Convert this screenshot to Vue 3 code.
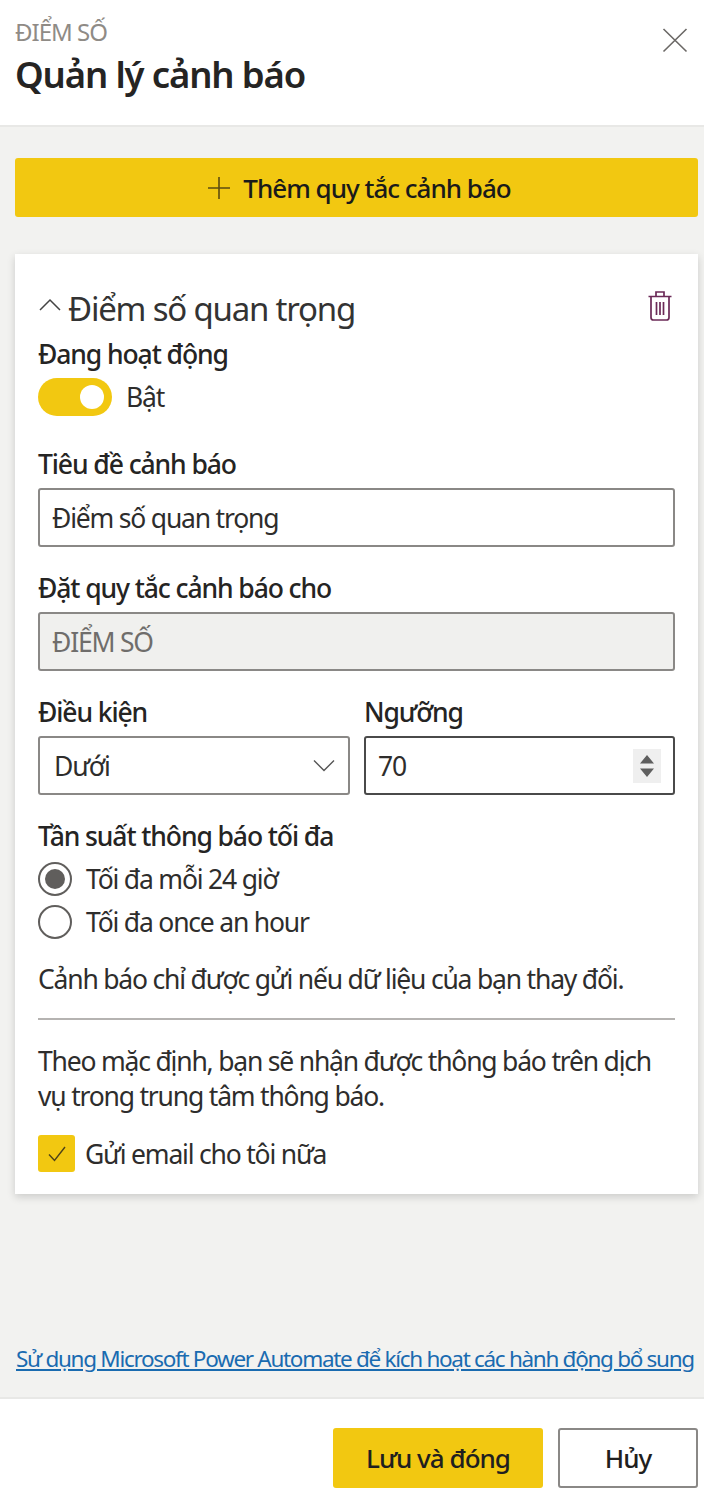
<script setup>
import { ref } from 'vue'

const isOn = ref(true)
const title = ref('Điểm số quan trọng')
const frequency = ref('day')
const sendEmail = ref(true)
</script>

<template>
  <div class="pane">
    <header class="head">
      <div class="head-text">
        <div class="kicker">ĐIỂM SỐ</div>
        <h1 class="pane-title">Quản lý cảnh báo</h1>
      </div>
      <svg class="close" width="26" height="26" viewBox="0 0 26 26">
        <path d="M1.5 2 L24.5 24.5 M24.5 2 L1.5 24.5" fill="none" stroke="#6b6866" stroke-width="1.6" />
      </svg>
    </header>

    <main class="body">
      <button class="add-btn">
        <svg width="24" height="24" viewBox="0 0 24 24">
          <path d="M12 1 V23 M1 12 H23" fill="none" stroke="#5c4c10" stroke-width="1.6" />
        </svg>
        <span>Thêm quy tắc cảnh báo</span>
      </button>

      <section class="card">
        <div class="card-head">
          <svg class="chevron" width="24" height="14" viewBox="0 0 24 14">
            <path d="M2 12 L12 2 L22 12" fill="none" stroke="#444" stroke-width="1.5" />
          </svg>
          <h2 class="card-title">Điểm số quan trọng</h2>
          <svg class="trash" width="26" height="32" viewBox="0 0 26 32">
            <path d="M1.5 6.5 H24.5 M9 6 V2 H17 V6 M4 7 V27.5 Q4 30 6.500 30 H19.500 Q22 30 22 27.500 V7 M9.500 12 V25 M13 12 V25 M16.500 12 V25"
              fill="none" stroke="#6b2a57" stroke-width="1.7" />
          </svg>
        </div>

        <div class="label">Đang hoạt động</div>
        <div class="toggle-row" @click="isOn = !isOn">
          <span class="toggle"><span class="knob"></span></span>
          <span class="text">{{ isOn ? 'Bật' : 'Tắt' }}</span>
        </div>

        <label class="label title-label">Tiêu đề cảnh báo</label>
        <input v-model="title" class="field" type="text">

        <div class="label rule-label">Đặt quy tắc cảnh báo cho</div>
        <div class="field disabled">ĐIỂM SỐ</div>

        <div class="cols">
          <div class="col-cond">
            <div class="label">Điều kiện</div>
            <div class="field select">
              <span>Dưới</span>
              <svg width="22" height="13" viewBox="0 0 22 13">
                <path d="M1 1.500 L11 11.500 L21 1.500" fill="none" stroke="#555" stroke-width="1.4" />
              </svg>
            </div>
          </div>
          <div class="col-limit">
            <div class="label">Ngưỡng</div>
            <div class="field number">
              <span>70</span>
              <span class="spin">
                <svg width="16" height="26" viewBox="0 0 16 26">
                  <path d="M8 2 L15 10.500 H1 Z M1 15.500 H15 L8 24 Z" fill="#5f5f5f" />
                </svg>
              </span>
            </div>
          </div>
        </div>

        <div class="label freq-label">Tần suất thông báo tối đa</div>
        <div class="radio-row" @click="frequency = 'day'">
          <span class="radio" :class="{ checked: frequency === 'day' }"></span>
          <span class="text">Tối đa mỗi 24 giờ</span>
        </div>
        <div class="radio-row second" @click="frequency = 'hour'">
          <span class="radio" :class="{ checked: frequency === 'hour' }"></span>
          <span class="text">Tối đa once an hour</span>
        </div>

        <p class="note">Cảnh báo chỉ được gửi nếu dữ liệu của bạn thay đổi.</p>
        <hr class="rule">
        <p class="note default-note">Theo mặc định, bạn sẽ nhận được thông báo trên dịch vụ trong trung tâm thông báo.</p>

        <div class="check-row" @click="sendEmail = !sendEmail">
          <span class="check">
            <svg v-if="sendEmail" width="20" height="18" viewBox="0 0 20 18">
              <path d="M2 9.500 L7.500 15.500 L18 2" fill="none" stroke="#4d4318" stroke-width="1.4" />
            </svg>
          </span>
          <span class="text">Gửi email cho tôi nữa</span>
        </div>
      </section>

      <a class="flow-link" href="#">Sử dụng Microsoft Power Automate để kích hoạt các hành động bổ sung</a>
    </main>

    <footer class="foot">
      <button class="save">Lưu và đóng</button>
      <button class="cancel">Hủy</button>
    </footer>
  </div>
</template>

<style scoped>
.pane {
  height: 1504px;
  display: flex;
  flex-direction: column;
  font-family: "Noto Sans", "Open Sans", sans-serif;
  color: #252423;
  background: #f2f2f0;
  overflow: hidden;
}

.head {
  height: 127px;
  box-sizing: border-box;
  padding: 17px 15px 0 15px;
  background: #fff;
  border-bottom: 2px solid #e8e8e6;
  display: flex;
  justify-content: space-between;
  align-items: flex-start;
}

.kicker {
  font-size: 24px;
  line-height: 30px;
  color: #8f8b86;
  letter-spacing: -1px;
}

.pane-title {
  margin: 5px 0 0;
  font-size: 36.500px;
  line-height: 44px;
  font-weight: 600;
  letter-spacing: -1.15px;
  color: #252423;
}

.close {
  margin-top: 10px;
  margin-right: 1px;
}

.body {
  flex: 1;
  padding: 31px 6px 0 15px;
  display: flex;
  flex-direction: column;
}

.add-btn {
  height: 59px;
  flex: none;
  border: 0;
  border-radius: 3px;
  background: #f2c811;
  color: #1a1a1a;
  font: 500 26px "Noto Sans", sans-serif;
  letter-spacing: -1px;
  display: flex;
  align-items: center;
  justify-content: center;
  gap: 12px;
  padding: 0 0 0 5px;
}

.card {
  margin-top: 37px;
  height: 940px;
  box-sizing: border-box;
  padding: 29px 23px 0;
  background: #fff;
  box-shadow: 0 3px 8px rgba(0, 0, 0, 0.16);
}

.card-head {
  height: 50px;
  display: flex;
  align-items: center;
}

.chevron {
  margin-right: 6px;
  margin-top: -6px;
}

.card-title {
  margin: 0;
  flex: 1;
  font-size: 33px;
  font-weight: 400;
  letter-spacing: -1.2px;
  color: #333;
}

.trash {
  margin-top: -4px;
  margin-right: 2px;
}

.label {
  display: block;
  font-size: 26.500px;
  line-height: 34px;
  font-weight: 500;
  letter-spacing: -1.1px;
  color: #252423;
  margin-top: 4px;
}

.toggle-row {
  margin-top: 7px;
  height: 38px;
  display: flex;
  align-items: center;
  gap: 14px;
}

.toggle {
  width: 74px;
  height: 38px;
  box-sizing: border-box;
  border-radius: 19px;
  background: #f2c811;
  display: flex;
  align-items: center;
  justify-content: flex-end;
  padding-right: 8px;
}

.knob {
  width: 24px;
  height: 24px;
  border-radius: 50%;
  background: #fff;
}

.text {
  font-size: 26.500px;
  letter-spacing: -1.2px;
  color: #2e2d2c;
}

.title-label {
  margin-top: 31px;
}

.rule-label {
  margin-top: 24px;
}

.field {
  display: flex;
  align-items: center;
  box-sizing: border-box;
  width: 100%;
  height: 59px;
  margin-top: 7px;
  padding: 0 12px;
  border: 2px solid #8a8886;
  border-radius: 3px;
  background: #fff;
  font: 400 26.500px "Noto Sans", sans-serif;
  letter-spacing: -1.2px;
  color: #2e2d2c;
  outline: none;
}

.disabled {
  background: #f0f0ee;
  color: #6f6d6b;
}

.cols {
  display: flex;
  gap: 14px;
  margin-top: 20px;
}

.col-cond {
  width: 312px;
}

.col-limit {
  flex: 1;
}

.select {
  justify-content: space-between;
  padding: 0 13px 0 14px;
}

.number {
  justify-content: space-between;
  border-color: #4a4a4a;
  padding-right: 12px;
}

.spin {
  width: 28px;
  height: 34px;
  background: #efefef;
  display: flex;
  align-items: center;
  justify-content: center;
}

.freq-label {
  margin-top: 24px;
}

.radio-row {
  margin-top: 9px;
  height: 34px;
  display: flex;
  align-items: center;
  gap: 14px;
}

.radio-row.second {
  margin-top: 9px;
}

.radio {
  width: 34px;
  height: 34px;
  box-sizing: border-box;
  border: 2px solid #605e5c;
  border-radius: 50%;
  display: flex;
  align-items: center;
  justify-content: center;
}

.radio.checked::after {
  content: "";
  width: 20px;
  height: 20px;
  border-radius: 50%;
  background: #605e5c;
}

.note {
  margin: 0;
  font-size: 26.500px;
  line-height: 35px;
  letter-spacing: -1.2px;
  color: #2e2d2c;
}

.radio-row.second + .note {
  margin-top: 23px;
}

.rule {
  margin: 21px 0 0;
  border: 0;
  border-top: 2px solid #b5b3b1;
}

.default-note {
  margin-top: 24px;
}

.check-row {
  margin-top: 21px;
  display: flex;
  align-items: center;
  gap: 10px;
}

.check {
  width: 37px;
  height: 37px;
  border-radius: 3px;
  background: #f2c811;
  display: flex;
  align-items: center;
  justify-content: center;
}

.flow-link {
  margin-top: auto;
  margin-bottom: 21px;
  padding-left: 1px;
  font-size: 22.500px;
  line-height: 34px;
  letter-spacing: -1.3px;
  color: #1a6bb0;
  white-space: nowrap;
}

.foot {
  height: 107px;
  box-sizing: border-box;
  padding: 29px 6px 0 0;
  background: #fff;
  border-top: 2px solid #e8e8e6;
  display: flex;
  justify-content: flex-end;
  gap: 15px;
}

.save,
.cancel {
  height: 60px;
  border-radius: 3px;
  font: 500 26px "Noto Sans", sans-serif;
  letter-spacing: -1px;
  color: #1f1f1f;
}

.save {
  width: 210px;
  border: 0;
  background: #f2c811;
}

.cancel {
  width: 140px;
  background: #fff;
  border: 2px solid #8a8886;
}
</style>
